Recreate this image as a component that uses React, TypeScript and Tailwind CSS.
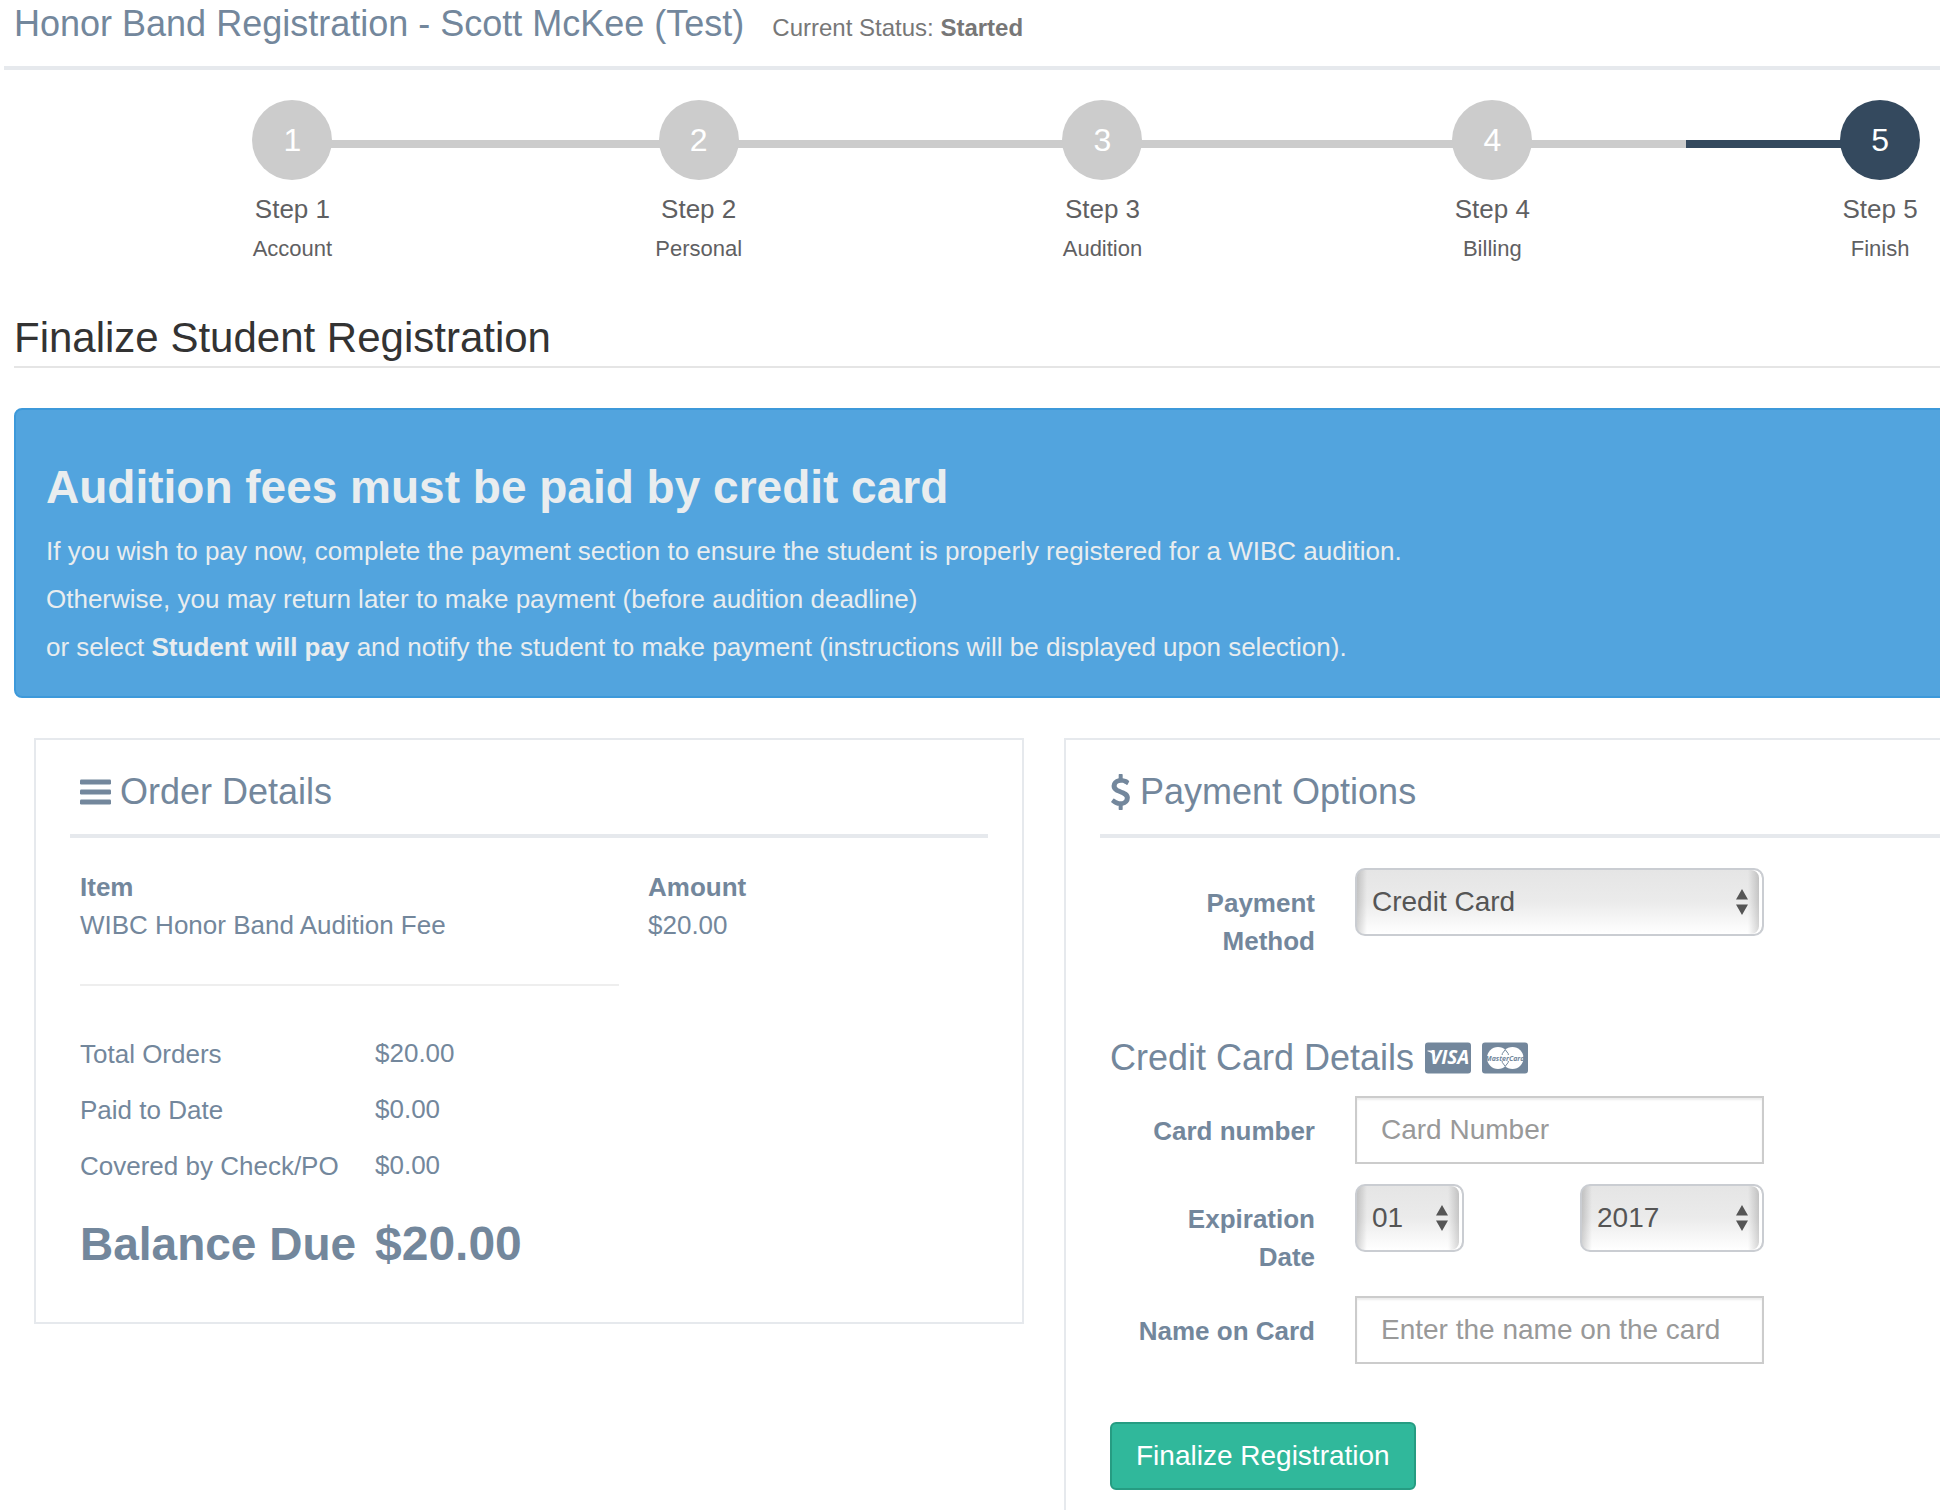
import type { ReactNode } from "react";

const steps = [
  { title: "Step 1", label: "Account" },
  { title: "Step 2", label: "Personal" },
  { title: "Step 3", label: "Audition" },
  { title: "Step 4", label: "Billing" },
  { title: "Step 5", label: "Finish" },
];

const totals = [
  { label: "Total Orders", value: "$20.00" },
  { label: "Paid to Date", value: "$0.00" },
  { label: "Covered by Check/PO", value: "$0.00" },
];

const CURRENT_STEP = 5;

function BarsIcon() {
  return (
    <svg className="h-[26px] w-[31px]" viewBox="0 0 31 26" fill="currentColor" aria-hidden="true">
      <rect y="0.5" width="31" height="5" rx="1.2" />
      <rect y="10.5" width="31" height="5" rx="1.2" />
      <rect y="20.5" width="31" height="5" rx="1.2" />
    </svg>
  );
}

function DollarIcon() {
  return (
    <svg className="h-9 w-[21px]" viewBox="0 0 1024 1792" fill="currentColor" aria-hidden="true">
      <path d="M978 1185q0 153 -99.5 263.5t-258.5 136.5v175q0 14 -9 23t-23 9h-135q-13 0 -22.5 -9.5t-9.5 -22.5v-175q-66 -9 -127.5 -31t-101.5 -44.5t-74 -48t-46.5 -37.5t-17.5 -18q-17 -21 -2 -41l103 -135q7 -10 23 -12q15 -2 24 9l2 2q113 99 243 125q37 8 74 8q81 0 142.5 -43t61.5 -122q0 -28 -15 -53t-33.5 -42t-58.5 -37.5t-66 -32t-80 -32.5q-39 -16 -61.5 -25t-61.5 -26.5t-62.5 -31t-56.5 -35.5t-53.5 -42.5t-43.5 -49t-35.5 -58t-21 -66.5t-8.5 -78q0 -138 98 -242t255 -134v-180q0 -13 9.5 -22.5t22.5 -9.5h135q14 0 23 9t9 23v176q57 6 110.5 23t87 33.5t63.5 37.5t39 29t15 14q17 18 5 38l-81 146q-8 15 -23 16q-14 3 -27 -7q-3 -3 -14.5 -12t-39 -26.5t-58.5 -32t-74.5 -26t-85.5 -11.5q-95 0 -155 43t-60 111q0 26 8.5 48t29.5 41.5t39.5 33t56 31t60.5 27t70 27.5q53 20 81 31.5t76 35t75.5 42.5t62 50t53 63.5t31.5 76.5t13 94z" />
    </svg>
  );
}

function VisaIcon() {
  return (
    <svg className="h-8 w-[46px]" viewBox="0 0 46 32" role="img" aria-label="Visa">
      <rect y="0.5" width="46" height="31" rx="3" fill="#73879C" />
      <path d="M2.500 8.600h5c1.200 0 1.800.5 2 1.500l1 6C8.800 12.300 6.200 10.200 2.500 9.200z" fill="#fff" />
      <text x="5" y="22" fill="#fff" className="font-['Open_Sans',sans-serif] text-[19px] font-bold italic">
        VISA
      </text>
    </svg>
  );
}

function MasterCardIcon() {
  return (
    <svg className="h-8 w-[46px]" viewBox="0 0 46 32" role="img" aria-label="MasterCard">
      <rect y="0.5" width="46" height="31" rx="3" fill="#73879C" />
      <circle cx="16" cy="16" r="11" fill="#fff" />
      <circle cx="30.500" cy="16" r="11" fill="#fff" />
      <path d="M23.250 7.700a11 11 0 0 1 0 16.600a11 11 0 0 1 0-16.600z" fill="none" stroke="#73879C" strokeWidth="1" />
      <rect x="7" y="13" width="32" height="6" fill="#fff" />
      <text
        x="23"
        y="18.500"
        textAnchor="middle"
        fill="#73879C"
        className="font-['Open_Sans',sans-serif] text-[7px] font-bold italic"
      >
        MasterCard
      </text>
    </svg>
  );
}

function Wizard() {
  return (
    <ol className="ml-[94px] grid grid-cols-[397fr_416fr_392fr_388fr_388fr] pt-[30px]">
      {steps.map((step, index) => {
        const fill = index + 1 === CURRENT_STEP ? "bg-[#34495E]" : "bg-[#CCCCCC]";
        return (
          <li key={step.title} className="text-center text-[#5F6062]">
            <div className="flex items-center">
              <span className={`mt-2 h-2 flex-1 ${index === 0 ? "bg-transparent" : fill}`} />
              <span className={`-mx-px flex size-20 items-center justify-center rounded-full text-[32px] text-white ${fill}`}>
                {index + 1}
              </span>
              <span className={`mt-2 h-2 flex-1 ${index === steps.length - 1 ? "bg-transparent" : fill}`} />
            </div>
            <p className="mt-2.5 text-[26px] leading-[38px]">{step.title}</p>
            <p className="text-[22px] leading-[42px]">{step.label}</p>
          </li>
        );
      })}
    </ol>
  );
}

function Panel({ icon, title, className, children }: { icon: ReactNode; title: string; className: string; children: ReactNode }) {
  return (
    <section className={`border-2 border-[#E6E9ED] px-[34px] ${className}`}>
      <h2 className="flex items-center gap-[9px] border-b-4 border-[#E6E9ED] px-2.5 pt-8 pb-[22px] text-[36px] leading-[40px]">
        {icon}
        {title}
      </h2>
      <div className="px-2.5 pt-[30px]">{children}</div>
    </section>
  );
}

function Field({ id, label, children }: { id: string; label: string; children: ReactNode }) {
  return (
    <div className="flex gap-10">
      <label htmlFor={id} className="w-[205px] pt-4 text-right text-[26px] leading-[38px] font-bold whitespace-pre-line">
        {label}
      </label>
      {children}
    </div>
  );
}

function Select({ id, label, width, options }: { id: string; label?: string; width: string; options: string[] }) {
  return (
    <div className={`relative h-[68px] ${width}`}>
      <select
        id={id}
        aria-label={label}
        className="h-full w-full appearance-none rounded-[10px] border-2 border-[#CACDD2] bg-[linear-gradient(to_right,rgba(0,0,0,0.16),transparent_10px,transparent_calc(100%-14px),rgba(0,0,0,0.2)),linear-gradient(#e5e5e5,#ebebeb_50%,#ffffff)] pl-[15px] text-[28px] text-[#555555] shadow-[inset_-3px_0_0_#ffffff]"
      >
        {options.map((option) => (
          <option key={option}>{option}</option>
        ))}
      </select>
      <svg
        className="pointer-events-none absolute top-[21px] right-4 h-[26px] w-3"
        viewBox="0 0 12 26"
        fill="#555555"
        aria-hidden="true"
      >
        <path d="M6 0l6 10.500H0zM6 26L0 15.500h12z" />
      </svg>
    </div>
  );
}

function TextInput({ id, placeholder }: { id: string; placeholder: string }) {
  return (
    <input
      id={id}
      type="text"
      placeholder={placeholder}
      className="h-[68px] w-[409px] border-2 border-[#CCCCCC] px-6 text-[28px] text-[#555555] shadow-[inset_0_2px_2px_rgba(0,0,0,0.075)] placeholder:text-[#999999]"
    />
  );
}

function OrderDetails() {
  return (
    <Panel icon={<BarsIcon />} title="Order Details" className="self-start pb-[50px]">
      <table className="w-full table-fixed text-left text-[26px] leading-[38px]">
        <thead>
          <tr>
            <th className="w-[568px] p-0 font-bold">Item</th>
            <th className="p-0 font-bold">Amount</th>
          </tr>
        </thead>
        <tbody>
          <tr>
            <td className="p-0">WIBC Honor Band Audition Fee</td>
            <td className="p-0">$20.00</td>
          </tr>
        </tbody>
      </table>
      <hr className="my-10 w-3/5 border-t-2 border-[#EEEEEE]" />
      <dl className="grid grid-cols-[295px_1fr] text-[26px] leading-[56px]">
        {totals.map((row) => (
          <div key={row.label} className="contents">
            <dt>{row.label}</dt>
            <dd className="leading-[54px]">{row.value}</dd>
          </div>
        ))}
        <dt className="mt-[22px] text-[46px] font-bold">Balance Due</dt>
        <dd className="mt-[22px] text-[48px] font-bold">$20.00</dd>
      </dl>
    </Panel>
  );
}

function PaymentOptions() {
  return (
    <Panel icon={<DollarIcon />} title="Payment Options" className="border-b-0 pb-5">
      <form onSubmit={(e) => e.preventDefault()}>
        <Field id="method" label={"Payment\nMethod"}>
          <Select id="method" width="w-[409px]" options={["Credit Card", "Student will pay"]} />
        </Field>

        <h3 className="mt-[78px] flex items-center gap-[11px] text-[36px] leading-[40px]">
          Credit Card Details
          <VisaIcon />
          <MasterCardIcon />
        </h3>

        <div className="mt-[18px] flex flex-col gap-5">
          <Field id="number" label="Card number">
            <TextInput id="number" placeholder="Card Number" />
          </Field>
          <Field id="month" label={"Expiration\nDate"}>
            <div className="flex w-[409px] justify-between">
              <Select id="month" width="w-[109px]" options={["01", "02", "03", "04", "05", "06"]} />
              <Select id="year" label="Expiration year" width="w-[184px]" options={["2017", "2018", "2019"]} />
            </div>
          </Field>
          <Field id="name" label="Name on Card">
            <TextInput id="name" placeholder="Enter the name on the card" />
          </Field>
        </div>

        <button
          type="submit"
          className="mt-[58px] h-[68px] rounded-md border-2 border-[#269C82] bg-[#30B89B] px-6 text-[28px] text-white"
        >
          Finalize Registration
        </button>
      </form>
    </Panel>
  );
}

export default function App() {
  return (
    <div className="flex min-h-screen flex-col overflow-hidden bg-white font-['Liberation_Sans',Arial,sans-serif] text-[#73879C]">
      {/* the content runs wider than the window and is clipped on the right */}
      <main className="-mr-[134px] flex flex-1 flex-col">
        <header className="ml-1 flex items-baseline gap-7 border-b-4 border-[#E6E9ED] pt-1 pb-5 pl-2.5">
          <h1 className="text-[36px] leading-[40px]">Honor Band Registration - Scott McKee (Test)</h1>
          <p className="text-[24px] text-[#777777]">
            Current Status: <strong>Started</strong>
          </p>
        </header>

        <Wizard />

        <h2 className="mt-11 ml-3.5 border-b-2 border-[#E5E5E5] pb-1 text-[42px] leading-[48px] text-[#333333]">
          Finalize Student Registration
        </h2>

        <div className="mt-10 ml-3.5 rounded-lg border-2 border-[#3D99DA] bg-[#52A4DE] px-[30px] pt-[49px] pb-[25px] text-[#E9EDEF]">
          <h2 className="text-[46px] leading-[56px] font-bold">Audition fees must be paid by credit card</h2>
          <p className="mt-3 text-[26px] leading-[48px]">
            If you wish to pay now, complete the payment section to ensure the student is properly registered for a WIBC
            audition.
            <br />
            Otherwise, you may return later to make payment (before audition deadline)
            <br />
            or select <strong>Student will pay</strong> and notify the student to make payment (instructions will be
            displayed upon selection).
          </p>
        </div>

        <div className="mt-10 mr-5 ml-[34px] grid flex-1 grid-cols-2 gap-10">
          <OrderDetails />
          <PaymentOptions />
        </div>
      </main>
    </div>
  );
}
